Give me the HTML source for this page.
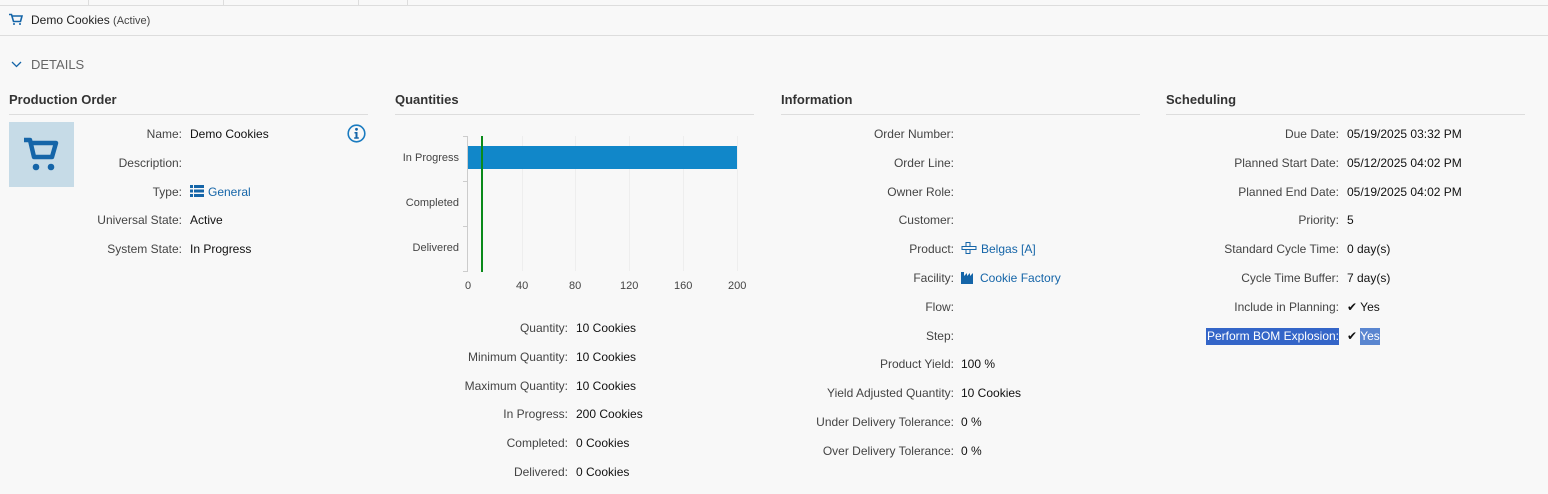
<!DOCTYPE html>
<html><head><style>
body{margin:0;width:1548px;height:494px;background:#f8f8f8;font-family:"Liberation Sans",sans-serif;font-size:12px;color:#222;position:relative;overflow:hidden}
.a{position:absolute;white-space:nowrap}
.l{position:absolute;text-align:right;color:#444;white-space:nowrap}
.v{position:absolute;white-space:nowrap;color:#111}
.h{position:absolute;font-weight:bold;font-size:13px;color:#333}
.u{position:absolute;height:1px;background:#ddd}
.lk{color:#1565a8}
.t{position:absolute;font-size:11px;color:#444}
</style></head><body>
<div class="u" style="left:0;top:5px;width:1548px"></div>
<div class="a" style="left:88px;top:0;width:1px;height:5px;background:#ddd"></div>
<div class="a" style="left:223px;top:0;width:1px;height:5px;background:#ddd"></div>
<div class="a" style="left:358px;top:0;width:1px;height:5px;background:#ddd"></div>
<div class="a" style="left:407px;top:0;width:1px;height:5px;background:#ddd"></div>
<div class="u" style="left:0;top:35px;width:1548px"></div>
<svg class="a" style="left:9px;top:13px" width="14" height="12" viewBox="0 0 14 12"><path d="M0 1.5h2.5l2 7h7l1.5-5.5H3.5" fill="none" stroke="#1565a8" stroke-width="1.6"/><circle cx="5" cy="11" r="1" fill="#1565a8"/><circle cx="11" cy="11" r="1" fill="#1565a8"/></svg>
<div class="a" style="left:31px;top:13px;font-size:12px">Demo Cookies <span style="font-size:11px;color:#444">(Active)</span></div>
<svg class="a" style="left:11px;top:61px" width="11" height="7"><path d="M1 1l4.5 4.5L10 1" fill="none" stroke="#1565a8" stroke-width="1.3"/></svg>
<div class="a" style="left:31px;top:57px;font-size:13px;color:#666">DETAILS</div>

<div class="h" style="left:9px;top:92px">Production Order</div><div class="u" style="left:9px;top:114px;width:359px"></div>
<div class="h" style="left:395px;top:92px">Quantities</div><div class="u" style="left:395px;top:114px;width:359px"></div>
<div class="h" style="left:781px;top:92px">Information</div><div class="u" style="left:781px;top:114px;width:359px"></div>
<div class="h" style="left:1166px;top:92px">Scheduling</div><div class="u" style="left:1166px;top:114px;width:359px"></div>

<div class="a" style="left:9px;top:122px;width:65px;height:65px;background:#c6dbe7"></div>
<svg class="a" style="left:22px;top:137px" width="40" height="36" viewBox="0 0 40 36"><path d="M2 3h6l4 17h18l4-14H10" fill="none" stroke="#1565a8" stroke-width="4.5" stroke-linejoin="round"/><circle cx="14" cy="30" r="3.3" fill="#1565a8"/><circle cx="29" cy="30" r="3.3" fill="#1565a8"/></svg>
<svg class="a" style="left:347px;top:124px" width="19" height="19" viewBox="0 0 19 19"><circle cx="9.5" cy="9.5" r="8.3" fill="none" stroke="#1a7bc0" stroke-width="1.6"/><circle cx="9.5" cy="5.3" r="1.4" fill="#1565a8"/><path d="M7.5 8h3v5.3h1.3v1.5h-4.6v-1.5h1.3v-3.8h-1z" fill="#1565a8"/></svg>

<script>
function rows(r,x,y0,dy,items){items.forEach((it,i)=>{const y=Math.round(y0+i*dy-7);document.write(`<div class="l" style="right:${1548-r}px;top:${y}px">${it[0]}</div><div class="v" style="left:${x}px;top:${y}px">${it[1]}</div>`);});}
</script>
<script>
rows(182,190,134,28.8,[["Name:","Demo Cookies"],["Description:",""],["Type:",'<span class="lk"><svg width="14" height="12" style="vertical-align:-1px;margin-right:4px"><path d="M0 0h3v3H0zM4 0h10v3H4zM0 4.5h3v3H0zM4 4.5h10v3H4zM0 9h3v3H0zM4 9h10v3H4z" fill="#1565a8"/></svg>General</span>'],["Universal State:","Active"],["System State:","In Progress"]]);
rows(568,576,328,28.8,[["Quantity:","10 Cookies"],["Minimum Quantity:","10 Cookies"],["Maximum Quantity:","10 Cookies"],["In Progress:","200 Cookies"],["Completed:","0 Cookies"],["Delivered:","0 Cookies"]]);
rows(954,961,134,28.8,[["Order Number:",""],["Order Line:",""],["Owner Role:",""],["Customer:",""],["Product:",'<span class="lk"><svg width="16" height="12" style="vertical-align:-1px;margin-right:4px"><path d="M5 0.5h4v4h-4zM1 4.5h14v3H1zM5 7.5h4v4h-4z" fill="none" stroke="#1565a8"/></svg>Belgas [A]</span>'],["Facility:",'<span class="lk"><svg width="14" height="13" style="vertical-align:-2px;margin-right:5px"><path d="M0 13V1h3v4l3-3v3l3-3v3l3-3v11z" fill="#1565a8"/></svg>Cookie Factory</span>'],["Flow:",""],["Step:",""],["Product Yield:","100 %"],["Yield Adjusted Quantity:","10 Cookies"],["Under Delivery Tolerance:","0 %"],["Over Delivery Tolerance:","0 %"]]);
rows(1339,1347,134,28.8,[["Due Date:","05/19/2025 03:32 PM"],["Planned Start Date:","05/12/2025 04:02 PM"],["Planned End Date:","05/19/2025 04:02 PM"],["Priority:","5"],["Standard Cycle Time:","0 day(s)"],["Cycle Time Buffer:","7 day(s)"],["Include in Planning:","&#10004; Yes"],['<span style="background:#3465c8;color:#fff;padding:1px 0 2px 1px">Perform BOM Explosion:</span>','&#10004; <span style="background:#5a86d0;color:#fff;padding:1px 0 2px">Yes</span>']]);
</script>

<div class="a" style="left:467px;top:136px;width:1px;height:135px;background:#ccc"></div>
<div class="a" style="left:463px;top:136px;width:5px;height:1px;background:#ccc"></div>
<div class="a" style="left:463px;top:181px;width:5px;height:1px;background:#ccc"></div>
<div class="a" style="left:463px;top:226px;width:5px;height:1px;background:#ccc"></div>
<div class="a" style="left:463px;top:271px;width:5px;height:1px;background:#ccc"></div>
<div class="a" style="left:522px;top:136px;width:1px;height:135px;background:#eee"></div>
<div class="a" style="left:575px;top:136px;width:1px;height:135px;background:#eee"></div>
<div class="a" style="left:629px;top:136px;width:1px;height:135px;background:#eee"></div>
<div class="a" style="left:683px;top:136px;width:1px;height:135px;background:#eee"></div>
<div class="a" style="left:737px;top:136px;width:1px;height:135px;background:#eee"></div>
<div class="a" style="left:468px;top:146px;width:269px;height:23px;background:#1187c9"></div>
<div class="a" style="left:481px;top:136px;width:2px;height:136px;background:#0a8a1a"></div>
<div class="t" style="right:1089px;top:152px;text-align:right">In Progress</div>
<div class="t" style="right:1089px;top:197px;text-align:right">Completed</div>
<div class="t" style="right:1089px;top:242px;text-align:right">Delivered</div>
<div class="t" style="left:465px;top:280px">0</div>
<div class="t" style="left:516px;top:280px">40</div>
<div class="t" style="left:569px;top:280px">80</div>
<div class="t" style="left:620px;top:280px">120</div>
<div class="t" style="left:674px;top:280px">160</div>
<div class="t" style="left:728px;top:280px">200</div>
</body></html>
